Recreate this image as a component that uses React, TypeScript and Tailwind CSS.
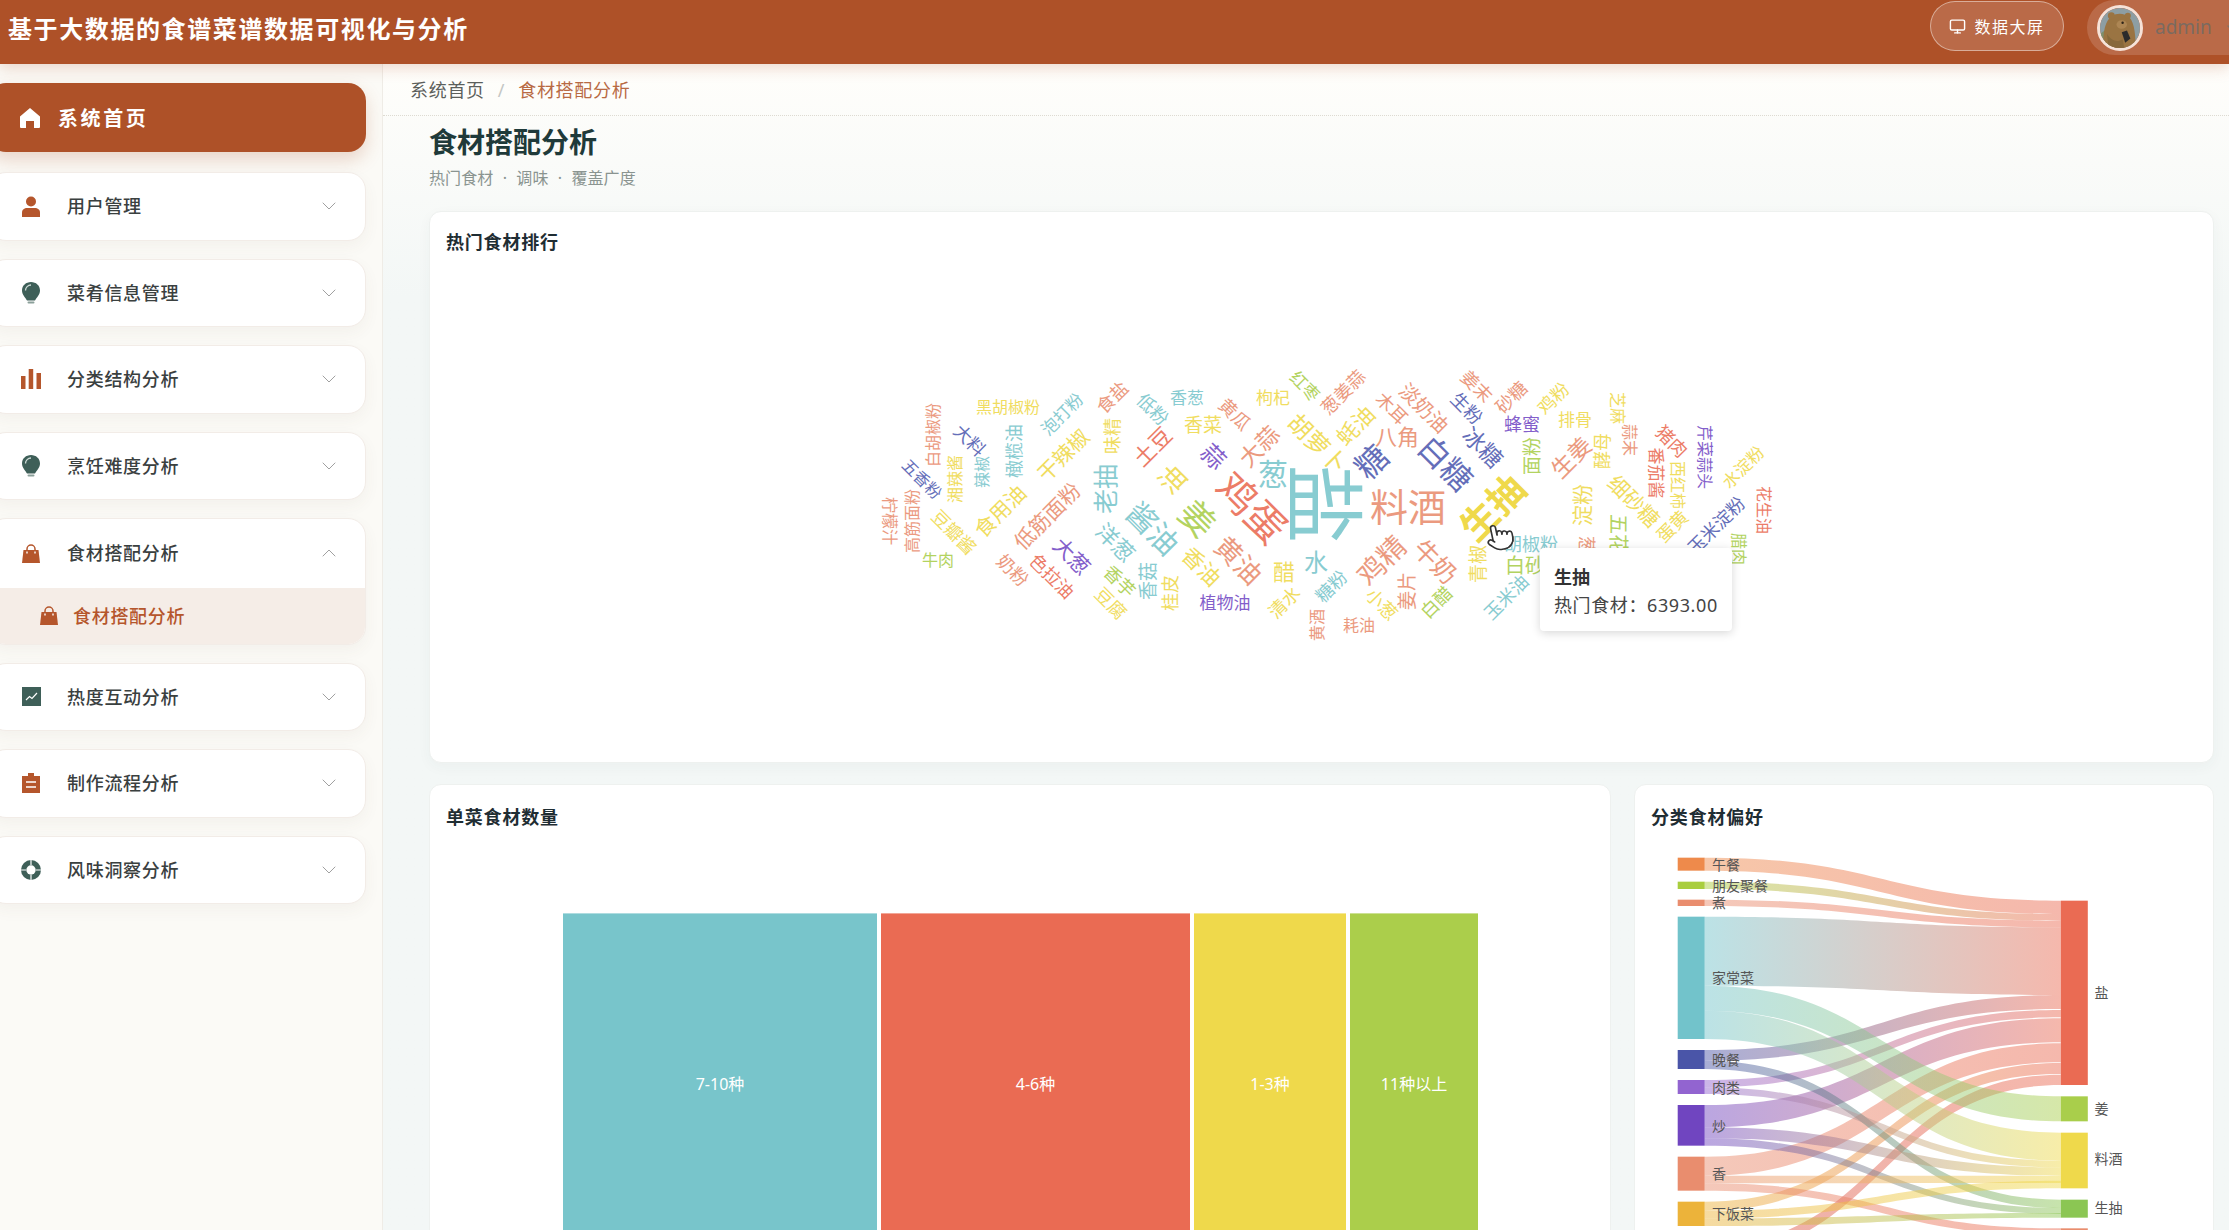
import { ChevronDown, ChevronUp, Monitor, Pointer } from 'lucide-react';
import type { ReactNode } from 'react';

const TEAL = '#78c5cb';
const RED = '#ea6b53';
const YELLOW = '#efd94b';
const GREEN = '#a9ce4b';
const BLUE = '#4f5bb0';
const PURPLE = '#7349c4';
const SALMON = '#e98d6e';

// text, cx, cy, size, rotation, colour (page coordinates)
const words: [string, number, number, number, number, string][] = [
  ['柠檬汁', 890, 522, 16, 90, SALMON],
  ['高筋面粉', 912, 522, 16, -90, SALMON],
  ['牛肉', 938, 561, 16, 0, GREEN],
  ['五香粉', 922, 480, 16, 45, BLUE],
  ['白胡椒粉', 933, 436, 16, -90, SALMON],
  ['湘辣酱', 955, 480, 16, -90, YELLOW],
  ['豆瓣酱', 954, 533, 18, 45, YELLOW],
  ['大料', 970, 441, 18, 45, BLUE],
  ['辣椒', 982, 473, 16, -90, TEAL],
  ['橄榄油', 1014, 452, 18, -90, TEAL],
  ['黑胡椒粉', 1008, 408, 16, 0, YELLOW],
  ['泡打粉', 1062, 415, 17, -45, TEAL],
  ['干辣椒', 1063, 456, 21, -45, YELLOW],
  ['食用油', 1000, 512, 21, -45, YELLOW],
  ['低筋面粉', 1047, 517, 21, -45, SALMON],
  ['奶粉', 1013, 571, 18, 45, SALMON],
  ['色拉油', 1052, 577, 18, 45, RED],
  ['大葱', 1072, 557, 21, 45, PURPLE],
  ['味精', 1112, 437, 18, -90, YELLOW],
  ['食盐', 1112, 398, 18, -45, SALMON],
  ['老抽', 1105, 490, 25, -90, TEAL],
  ['洋葱', 1116, 543, 22, 45, TEAL],
  ['酱油', 1153, 529, 30, 45, TEAL],
  ['姜', 1198, 519, 35, 45, GREEN],
  ['鸡蛋', 1252, 508, 40, 45, RED],
  ['土豆', 1152, 447, 22, -45, RED],
  ['油', 1172, 480, 27, -45, YELLOW],
  ['低粉', 1153, 410, 18, 45, TEAL],
  ['香葱', 1187, 398, 17, 0, TEAL],
  ['香菜', 1203, 426, 19, 0, YELLOW],
  ['黄瓜', 1235, 415, 18, 45, SALMON],
  ['枸杞', 1273, 398, 17, 0, YELLOW],
  ['红枣', 1305, 387, 17, 45, GREEN],
  ['胡萝卜', 1318, 444, 24, 45, YELLOW],
  ['蒜', 1214, 457, 24, 45, PURPLE],
  ['大蒜', 1259, 447, 23, -45, SALMON],
  ['葱', 1273, 474, 30, 0, TEAL],
  ['黄油', 1239, 561, 27, 45, SALMON],
  ['香油', 1202, 567, 22, 45, YELLOW],
  ['香菇', 1148, 582, 19, -90, TEAL],
  ['桂皮', 1170, 594, 18, -90, YELLOW],
  ['香芋', 1120, 582, 18, 45, GREEN],
  ['豆腐', 1111, 604, 18, 45, YELLOW],
  ['植物油', 1225, 603, 17, 0, PURPLE],
  ['醋', 1284, 572, 22, 0, YELLOW],
  ['水', 1316, 562, 24, 0, TEAL],
  ['清水', 1284, 603, 18, -45, YELLOW],
  ['糖粉', 1331, 587, 18, -45, TEAL],
  ['黄酒', 1317, 626, 16, -90, SALMON],
  ['盐', 1326, 505, 80, 90, TEAL],
  ['葱姜蒜', 1343, 393, 18, -45, SALMON],
  ['蚝油', 1355, 426, 22, -45, YELLOW],
  ['木耳', 1392, 409, 18, 45, SALMON],
  ['淡奶油', 1424, 409, 20, 45, SALMON],
  ['八角', 1397, 437, 22, 0, SALMON],
  ['糖', 1371, 462, 32, -45, BLUE],
  ['白糖', 1446, 464, 31, 45, BLUE],
  ['料酒', 1408, 507, 38, 0, SALMON],
  ['生粉', 1467, 409, 18, 45, BLUE],
  ['冰糖', 1483, 448, 23, 45, BLUE],
  ['姜末', 1477, 387, 18, 45, SALMON],
  ['砂糖', 1511, 398, 18, -45, SALMON],
  ['蜂蜜', 1522, 425, 18, 0, PURPLE],
  ['鸡粉', 1553, 399, 18, -45, YELLOW],
  ['排骨', 1575, 420, 17, 0, YELLOW],
  ['面粉', 1532, 457, 19, -90, GREEN],
  ['生姜', 1571, 458, 23, -45, SALMON],
  ['酵母', 1602, 452, 18, -90, YELLOW],
  ['芝麻', 1618, 409, 16, 90, YELLOW],
  ['蒜末', 1630, 441, 16, 90, SALMON],
  ['猪肉', 1672, 442, 18, 45, RED],
  ['番茄酱', 1656, 474, 17, 90, RED],
  ['芹菜蒜头', 1705, 458, 16, 90, PURPLE],
  ['西红柿', 1678, 486, 16, 90, YELLOW],
  ['细砂糖', 1634, 502, 21, 45, YELLOW],
  ['淀粉', 1582, 506, 21, -90, YELLOW],
  ['水淀粉', 1743, 468, 17, -45, YELLOW],
  ['花生油', 1764, 511, 16, 90, RED],
  ['玉米淀粉', 1716, 526, 18, -45, BLUE],
  ['蛋黄', 1672, 527, 18, -45, YELLOW],
  ['五花肉', 1618, 545, 20, 90, GREEN],
  ['葱花', 1587, 555, 18, 90, SALMON],
  ['胡椒粉', 1531, 545, 18, 0, TEAL],
  ['白砂糖', 1535, 566, 20, 0, GREEN],
  ['青椒', 1478, 565, 19, -90, YELLOW],
  ['牛奶', 1436, 562, 25, 45, SALMON],
  ['鸡精', 1381, 561, 28, -45, SALMON],
  ['姜片', 1407, 592, 19, -90, SALMON],
  ['白醋', 1436, 603, 18, -45, GREEN],
  ['小葱', 1382, 605, 18, 45, YELLOW],
  ['耗油', 1359, 626, 16, 0, SALMON],
  ['玉米油', 1506, 598, 18, -45, TEAL],
  ['腊肉', 1739, 550, 16, 90, GREEN],
  ['生抽', 1492, 508, 37, -45, YELLOW],
];

// sankey values are read off the chart: source y, target y, thickness on each side
const ZY = (v: number) => 780 + v / 3;
const LEFT_X = 1704.7;
const RIGHT_X = 2060.8;

const leftNodes = [
  { name: '午餐', a: 236, b: 275, color: '#ee8a4b' },
  { name: '朋友聚餐', a: 308, b: 330, color: '#a9ce3e' },
  { name: '煮', a: 362, b: 381, color: SALMON },
  { name: '家常菜', a: 413, b: 780, color: '#72c3cb' },
  { name: '晚餐', a: 813, b: 870, color: '#4a55a8' },
  { name: '肉类', a: 903, b: 945, color: '#9264d0' },
  { name: '炒', a: 978, b: 1100, color: '#7045c0' },
  { name: '香', a: 1133, b: 1235, color: SALMON },
  { name: '下饭菜', a: 1268, b: 1341, color: '#ecb33a' },
];

const rightNodes = [
  { name: '盐', a: 365, b: 918, color: RED, ty: 640 },
  { name: '姜', a: 952, b: 1027, color: GREEN, ty: 988 },
  { name: '料酒', a: 1061, b: 1228, color: YELLOW, ty: 1138 },
  { name: '生抽', a: 1262, b: 1316, color: '#8bc653', ty: 1285 },
];

const links: [number, number, number, number, string, string][] = [
  [236, 275, 365, 405, '#ee8a4b', RED],
  [308, 330, 405, 425, '#a9ce3e', RED],
  [362, 381, 425, 445, SALMON, RED],
  [413, 620, 445, 648, '#72c3cb', RED],
  [813, 845, 648, 690, '#4a55a8', RED],
  [903, 925, 693, 715, '#9264d0', RED],
  [978, 1045, 718, 790, '#7045c0', RED],
  [1133, 1190, 793, 850, SALMON, RED],
  [1268, 1295, 852, 885, '#ecb33a', RED],
  [1400, 1432, 887, 918, '#d9584a', RED],
  [620, 695, 952, 1027, '#72c3cb', GREEN],
  [695, 780, 1061, 1145, '#72c3cb', YELLOW],
  [845, 870, 1262, 1287, '#4a55a8', '#8bc653'],
  [925, 945, 1145, 1165, '#9264d0', YELLOW],
  [1045, 1078, 1165, 1190, '#7045c0', YELLOW],
  [1078, 1100, 1287, 1305, '#7045c0', '#8bc653'],
  [1190, 1213, 1190, 1212, SALMON, YELLOW],
  [1213, 1235, 1348, 1370, SALMON, RED],
  [1295, 1318, 1205, 1228, '#ecb33a', YELLOW],
  [1318, 1341, 1302, 1316, '#ecb33a', '#8bc653'],
];

function linkPath(s0: number, s1: number, t0: number, t1: number) {
  const mid = (LEFT_X + RIGHT_X) / 2;
  return `M${LEFT_X} ${ZY(s0)}C${mid} ${ZY(s0)} ${mid} ${ZY(t0)} ${RIGHT_X} ${ZY(t0)}L${RIGHT_X} ${ZY(t1)}C${mid} ${ZY(t1)} ${mid} ${ZY(s1)} ${LEFT_X} ${ZY(s1)}Z`;
}

const BROWN = '#b5562c';
const PINE = '#3e5f58';

function HomeIcon() {
  return (
    <svg viewBox="0 0 22 22" className="w-[22px] h-[22px]" fill="#fff">
      <path d="M11 1 21 9.500V20a1 1 0 0 1-1 1h-5v-7H7v7H2a1 1 0 0 1-1-1V9.500Z" />
    </svg>
  );
}

function UserIcon() {
  return (
    <svg viewBox="0 0 20 21" className="w-5 h-[21px]" fill={BROWN}>
      <circle cx="10" cy="5.500" r="5" />
      <path d="M1 21v-4.500C1 13.500 3.500 12 6 12h8c2.500 0 5 1.500 5 4.500V21Z" />
    </svg>
  );
}

function BulbIcon() {
  return (
    <svg viewBox="0 0 18 22" className="w-[18px] h-[22px]" fill={PINE}>
      <path d="M9 0c5 0 9 3.500 9 8.500 0 4.500-3.500 7-5 10H5c-1.500-3-5-5.500-5-10C0 3.500 4 0 9 0Z" />
      <path d="M3.500 8.500C3.500 5.500 6 3 9 3" stroke="#cfdcd8" strokeWidth="1.300" fill="none" />
      <rect x="5.500" y="19.500" width="7" height="2" rx="1" fill="#8ba09a" />
    </svg>
  );
}

function BarsIcon() {
  return (
    <svg viewBox="0 0 20 20" className="w-5 h-5" fill={BROWN}>
      <rect x="0" y="7" width="4.500" height="13" />
      <rect x="7.700" y="0" width="4.500" height="20" />
      <rect x="15.500" y="4" width="4.500" height="16" />
    </svg>
  );
}

function BagIcon() {
  return (
    <svg viewBox="0 0 18 19" className="w-[18px] h-[19px]" fill={BROWN}>
      <path d="M1.500 6h15L18 19H0Z" />
      <path d="M5 8V5a4 4 0 0 1 8 0v3" fill="none" stroke={BROWN} strokeWidth="1.500" />
      <path d="M4.300 8.500h1.400M12.300 8.500h1.400" stroke="#fff" strokeWidth="2" />
    </svg>
  );
}

function LineChartIcon() {
  return (
    <svg viewBox="0 0 19 19" className="w-[19px] h-[19px]">
      <rect width="19" height="19" fill={PINE} />
      <path d="M4 13l3.500-3.500 2.500 2 5-5.500" fill="none" stroke="#fff" strokeWidth="1.200" />
    </svg>
  );
}

function ClipboardIcon() {
  return (
    <svg viewBox="0 0 18 20" className="w-[18px] h-5" fill={BROWN}>
      <path d="M0 3h18v17H0Z" />
      <rect x="6" y="0" width="6" height="4" />
      <path d="M4 9h10M4 14h10" stroke="#fff" strokeWidth="1.500" />
    </svg>
  );
}

function HelpIcon() {
  return (
    <svg viewBox="0 0 20 20" className="w-5 h-5">
      <circle cx="10" cy="10" r="10" fill={PINE} />
      <circle cx="10" cy="10" r="4.700" fill="#fff" />
      <path d="M10 0v5M10 15v5M0 10h5M15 10h5" stroke="#fff" strokeWidth="1.200" />
    </svg>
  );
}

function BearAvatar() {
  return (
    <svg viewBox="0 0 46 46" className="w-full h-full">
      <rect width="46" height="46" fill="#8d9ea3" />
      <path d="M0 46V30l8-6 8 22Z" fill="#7e8f6c" />
      <path d="M4 46C3 28 6 14 14 9c6-4 15-3 20 2 6 7 7 22 7 35Z" fill="#9a7442" />
      <circle cx="13" cy="9" r="4" fill="#9a7442" />
      <circle cx="32" cy="9" r="3.500" fill="#9a7442" />
      <ellipse cx="25" cy="19" rx="6" ry="5" fill="#ad8654" />
      <circle cx="26" cy="17" r="1.400" fill="#2d2418" />
      <path d="M8 30c5 8 12 10 18 6l2 10H10Z" fill="#87683b" />
      <path d="M25 28l6-2 4 9-6 5Z" fill="#2b2b2b" />
    </svg>
  );
}

function MenuItem({ icon, label }: { icon: ReactNode; label: string }) {
  return (
    <div className="h-[68.5px] bg-white rounded-[18px] border border-[#f2ece7] shadow-[0_6px_16px_rgba(90,80,60,0.05)] flex items-center pl-[32px] pr-[24px] shrink-0">
      <span className="w-5 flex justify-center shrink-0">{icon}</span>
      <span className="ml-[26px] pt-[1px] flex-1 text-[18px] font-medium tracking-[0.7px] text-[#3a403f]">{label}</span>
      <ChevronDown size={24} strokeWidth={1} color="#a0a0a0" />
    </div>
  );
}

export default function App() {
  return (
    <div className="w-[2229px] h-[1230px] overflow-hidden flex flex-col bg-white font-['Noto_Sans','Noto_Sans_CJK_SC',sans-serif]">
      {/* 顶栏 */}
      <header className="h-16 shrink-0 bg-[#ae5128] flex items-center relative z-10 shadow-[0_4px_14px_rgba(174,81,40,0.22)]">
        <h1 className="pl-2 pb-[7px] text-[24px] font-bold tracking-[1.600px] text-white flex-1">基于大数据的食谱菜谱数据可视化与分析</h1>
        <button className="w-[134px] h-[50px] mb-3 rounded-full border border-white/45 bg-white/15 text-white text-[16px] tracking-[1.500px] flex items-center justify-center gap-2">
          <Monitor size={17} strokeWidth={2} />
          <span className="pt-[2px]">数据大屏</span>
        </button>
        <div className="w-[142px] h-[55px] mb-[9px] ml-[23px] rounded-l-[28px] bg-white/15 flex items-center pl-[10px] shrink-0">
          <span className="w-[46px] h-[46px] rounded-full overflow-hidden border-[3px] border-[#f6e2d8] shrink-0">
            <BearAvatar />
          </span>
          <span className="ml-3 text-[19px] text-[#7a6a60]">admin</span>
          <ChevronDown size={16} className="ml-3 shrink-0 text-[#86705f]" />
        </div>
      </header>

      <div className="flex-1 flex min-h-0">
        {/* 侧边栏 */}
        <aside className="w-[383px] shrink-0 bg-[#fbfaf6] border-r border-[#efece6] overflow-hidden pt-[19px]">
          <div className="w-[378px] -ml-3 flex flex-col gap-[18px]">
            <div className="h-[69px] mb-[2px] rounded-[18px] bg-[#ae5128] shadow-[0_8px_18px_rgba(174,81,40,0.22)] flex items-center pl-[31px] shrink-0">
              <HomeIcon />
              <span className="ml-[17px] pt-[2px] text-[20px] font-bold tracking-[2.600px] text-white">系统首页</span>
            </div>
            <MenuItem icon={<UserIcon />} label="用户管理" />
            <MenuItem icon={<BulbIcon />} label="菜肴信息管理" />
            <MenuItem icon={<BarsIcon />} label="分类结构分析" />
            <MenuItem icon={<BulbIcon />} label="烹饪难度分析" />
            <div className="rounded-[18px] bg-white border border-[#f2ece7] shadow-[0_6px_16px_rgba(90,80,60,0.05)] overflow-hidden shrink-0">
              <div className="h-[68.5px] flex items-center pl-[32px] pr-[24px]">
                <span className="w-5 flex justify-center shrink-0"><BagIcon /></span>
                <span className="ml-[26px] flex-1 text-[18px] font-medium tracking-[0.7px] text-[#3a403f]">食材搭配分析</span>
                <ChevronUp size={24} strokeWidth={1} color="#a0a0a0" />
              </div>
              <div className="h-[56px] bg-[#f5ede7] flex items-center pl-[51px]">
                <BagIcon />
                <span className="ml-[15px] pt-[2px] text-[18px] font-medium tracking-[0.7px] text-[#b5562c]">食材搭配分析</span>
              </div>
            </div>
            <MenuItem icon={<LineChartIcon />} label="热度互动分析" />
            <MenuItem icon={<ClipboardIcon />} label="制作流程分析" />
            <MenuItem icon={<HelpIcon />} label="风味洞察分析" />
          </div>
        </aside>

        <main className="flex-1 min-w-0 overflow-hidden bg-gradient-to-b from-[#fffefb] to-[#f3f7f6] to-[20%]">
          {/* 面包屑 */}
          <div className="h-[52px] border-b border-dotted border-[#dedbd2] pl-[27px] pt-[2px] flex items-center text-[18px] tracking-[0.7px]">
            <span className="text-[#5c5f5c]">系统首页</span>
            <span className="mx-[13px] text-[#c4c6c4]">/</span>
            <span className="text-[#b86a44]">食材搭配分析</span>
          </div>

          <div className="pl-[46px] pr-[15px]">
            <h2 className="mt-[7px] text-[28px] leading-[38px] font-bold text-[#1f3a3a]">食材搭配分析</h2>
            <p className="mt-[5px] text-[16px] leading-[24px] tracking-[0.1px] [word-spacing:5px] text-[#8a9490]">热门食材 · 调味 · 覆盖广度</p>

            {/* 词云 */}
            <section className="mt-[21px] h-[552px] bg-white rounded-xl border border-[#eef1ef] shadow-[0_4px_14px_rgba(60,80,70,0.04)] overflow-hidden">
              <h3 className="pl-4 pt-[17px] h-[49px] text-[18px] leading-[26px] font-bold tracking-[0.8px] text-[#1f2d33]">热门食材排行</h3>
              <div className="relative h-[500px]">
                <svg viewBox="430 262 1783 500" className="w-full h-full">
                  {words.map(([text, x, y, size, rot, color]) => (
                    <text
                      key={text}
                      x={x}
                      y={y}
                      fontSize={size}
                      fontWeight={text === '生抽' ? 700 : 400}
                      fill={color}
                      opacity={text === '生抽' ? 1 : 0.88}
                      textAnchor="middle"
                      dominantBaseline="central"
                      transform={`rotate(${rot} ${x} ${y})`}
                    >
                      {text}
                    </text>
                  ))}
                </svg>
                <Pointer
                  size={30}
                  strokeWidth={1.300}
                  fill="#fff"
                  color="#333"
                  className="absolute left-[1055px] top-[261px] -rotate-12"
                />
                <div className="absolute left-[1110px] top-[287px] w-[192px] h-[83px] bg-white rounded shadow-[0_2px_10px_rgba(0,0,0,0.16)] pl-[14px] pt-[15px] text-[#333]">
                  <div className="text-[18px] leading-[28px] font-bold">生抽</div>
                  <div className="text-[18px] leading-[28px] tracking-[0.6px] text-[#444]">热门食材：6393.00</div>
                </div>
              </div>
            </section>

            <div className="mt-[21px] flex gap-[23px]">
              {/* 矩形树图 */}
              <section className="w-[1182px] h-[600px] shrink-0 bg-white rounded-xl border border-[#eef1ef] overflow-hidden">
                <h3 className="pl-4 pt-[19px] text-[18px] leading-[26px] font-bold tracking-[0.8px] text-[#1f2d33]">单菜食材数量</h3>
                <div className="mt-[83px] ml-[133px] h-[400px] flex gap-1 text-white text-[16px]">
                  <div className="w-[314px] bg-[#78c5cb] border-t border-white/40 pt-[158px] text-center">7-10种</div>
                  <div className="w-[309px] bg-[#ea6b53] border-t border-white/40 pt-[158px] text-center">4-6种</div>
                  <div className="w-[152px] bg-[#efd94b] border-t border-white/40 pt-[158px] text-center">1-3种</div>
                  <div className="w-[128px] bg-[#abce4b] border-t border-white/40 pt-[158px] text-center">11种以上</div>
                </div>
              </section>

              {/* 桑基图 */}
              <section className="flex-1 min-w-0 h-[600px] bg-white rounded-xl border border-[#eef1ef] overflow-hidden">
                <h3 className="pl-4 pt-[19px] h-[64px] text-[18px] leading-[26px] font-bold tracking-[0.8px] text-[#1f2d33]">分类食材偏好</h3>
                <svg viewBox="1635 850 578 400" className="w-[578px] h-[400px]">
                  <defs>
                    {links.map((l, i) => (
                      <linearGradient key={i} id={`link-${i}`} gradientUnits="userSpaceOnUse" x1={LEFT_X} y1="0" x2={RIGHT_X} y2="0">
                        <stop offset="0" stopColor={l[4]} />
                        <stop offset="1" stopColor={l[5]} />
                      </linearGradient>
                    ))}
                  </defs>
                  {links.map((l, i) => (
                    <path key={i} d={linkPath(l[0], l[1], l[2], l[3])} fill={`url(#link-${i})`} opacity={0.48} />
                  ))}
                  {leftNodes.map((n) => (
                    <g key={n.name}>
                      <rect x={LEFT_X - 27} y={ZY(n.a)} width={27} height={(n.b - n.a) / 3} fill={n.color} />
                      <text x={1712} y={ZY((n.a + n.b) / 2)} fontSize={14} fill="#555" dominantBaseline="central">{n.name}</text>
                    </g>
                  ))}
                  {rightNodes.map((n) => (
                    <g key={n.name}>
                      <rect x={RIGHT_X} y={ZY(n.a)} width={27} height={(n.b - n.a) / 3} fill={n.color} />
                      <text x={2094.600} y={ZY(n.ty)} fontSize={14} fill="#555" dominantBaseline="central">{n.name}</text>
                    </g>
                  ))}
                  <rect x={RIGHT_X} y={ZY(1348)} width={27} height={8} fill={SALMON} />
                </svg>
              </section>
            </div>
          </div>
        </main>
      </div>
    </div>
  );
}
